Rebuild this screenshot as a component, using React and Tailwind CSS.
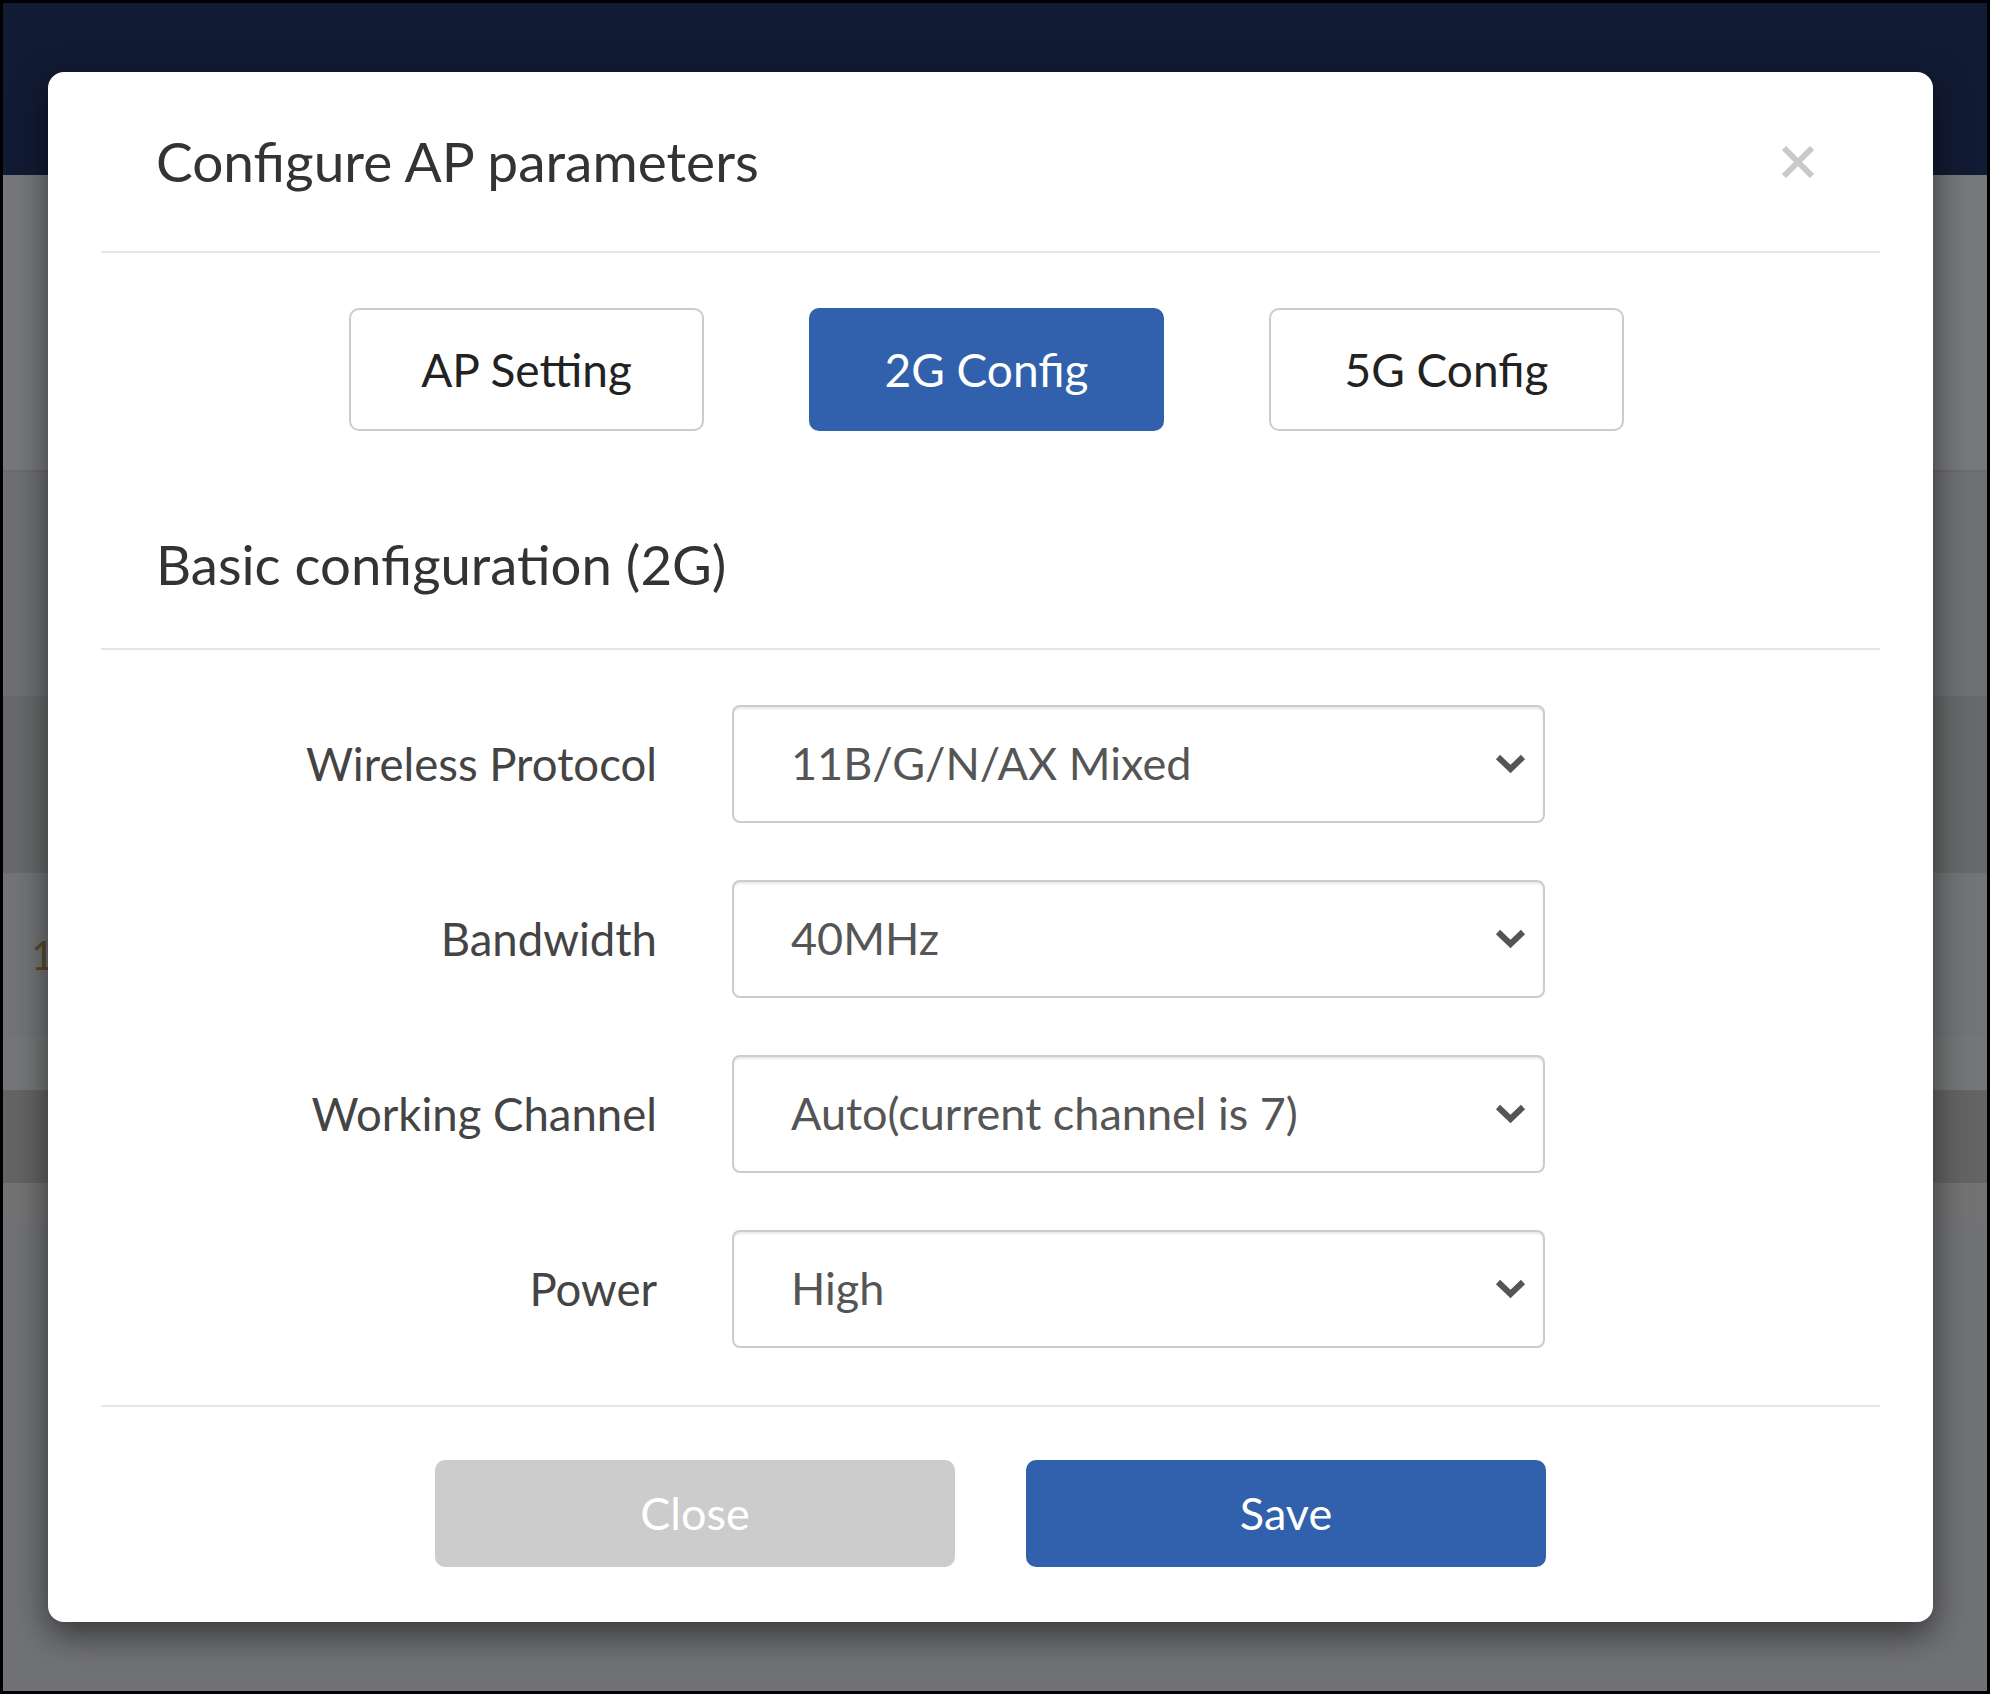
import React from "react";

const rows = [
  { label: "Wireless Protocol", value: "11B/G/N/AX Mixed" },
  { label: "Bandwidth", value: "40MHz" },
  { label: "Working Channel", value: "Auto(current channel is 7)" },
  { label: "Power", value: "High" },
];

const Chevron = () => (
  <svg width="33" height="22" viewBox="0 0 33 22" fill="none">
    <path d="M4 4 L16.5 16 L29 4" stroke="#555" strokeWidth="6" strokeLinejoin="miter" />
  </svg>
);

export default function App() {
  return (
    <div className="relative h-[1694px] w-[1990px] overflow-hidden border-[3px] border-black bg-[#717276] font-['Lato',sans-serif]">
      {/* dimmed page behind the dialog */}
      <div className="h-[172px] bg-[#121b34]" />
      <div className="h-[295px] bg-[#77787a]" />
      <div className="h-[226px] border-t-2 border-[#6a6b6e] bg-[#6f7072]" />
      <div className="h-[177px] bg-[#68696a]" />
      <div className="flex h-[163px] items-center bg-[#737476] pl-[28px] text-[40px] text-[#5b4a2a]">1</div>
      <div className="h-[54px] bg-[#757677]" />
      <div className="h-[93px] bg-[#646465]" />
      <div className="h-[40px] bg-[#737374]" />

      <div className="absolute left-[45px] top-[69px] flex h-[1550px] w-[1885px] flex-col rounded-[16px] bg-white px-[53px] shadow-[0_12px_35px_rgba(0,0,0,0.55)]">
        <div className="flex h-[179px] items-center justify-between pl-[55px] pr-[64px]">
          <h1 className="text-[55px] text-[#333]">Configure AP parameters</h1>
          <svg width="36" height="36" viewBox="0 0 36 36">
            <path d="M4 4 L32 32 M32 4 L4 32" stroke="#c9c9c9" strokeWidth="6" />
          </svg>
        </div>
        <div className="h-[2px] bg-[#e5e5e5]" />

        <div className="flex justify-center gap-[105px] pr-[8px] pt-[55px]">
          <button className="h-[123px] w-[355px] rounded-[10px] border-2 border-[#ccc] bg-white text-[46px] text-[#222]">AP Setting</button>
          <button className="h-[123px] w-[355px] rounded-[10px] bg-[#3161ad] text-[46px] text-white">2G Config</button>
          <button className="h-[123px] w-[355px] rounded-[10px] border-2 border-[#ccc] bg-white text-[46px] text-[#222]">5G Config</button>
        </div>

        <h2 className="pb-[54px] pl-[55px] pt-[103px] text-[54.5px] leading-[60px] text-[#333]">Basic configuration (2G)</h2>
        <div className="h-[2px] bg-[#e5e5e5]" />

        <div className="flex flex-col gap-[57px] pb-[57px] pt-[55px]">
          {rows.map((r) => (
            <div key={r.label} className="flex items-center gap-[75px]">
              <label className="w-[556px] text-right text-[45.5px] text-[#444]">{r.label}</label>
              <div className="flex h-[118px] w-[813px] items-center justify-between rounded-[8px] border-2 border-[#ccc] pl-[57px] pr-[16px] text-[45px] text-[#555] shadow-[inset_0_2px_2px_rgba(0,0,0,0.09)]">
                <span>{r.value}</span>
                <Chevron />
              </div>
            </div>
          ))}
        </div>
        <div className="h-[2px] bg-[#e5e5e5]" />

        <div className="flex justify-center gap-[71px] pt-[53px]">
          <button className="h-[107px] w-[520px] rounded-[10px] bg-[#cccccc] text-[45px] text-white">Close</button>
          <button className="h-[107px] w-[520px] rounded-[10px] bg-[#3161ad] text-[45px] text-white">Save</button>
        </div>
      </div>
    </div>
  );
}
